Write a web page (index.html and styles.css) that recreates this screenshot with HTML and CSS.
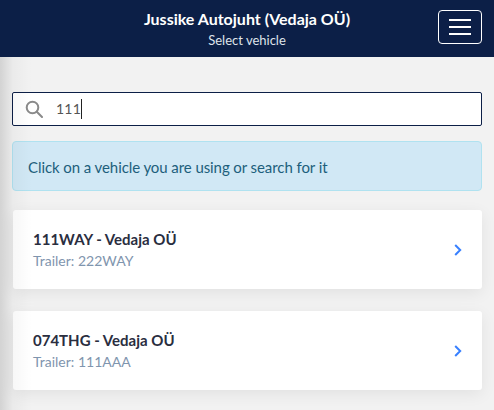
FILE: index.html
```html
<!DOCTYPE html>
<html>
<head>
	<meta charset="utf-8">
	<meta name="viewport" content="width=device-width, initial-scale=1">
	<title>Select vehicle</title>
	<link rel="stylesheet" href="styles.css">
</head>
<body>
	<div class="edge-shadow"></div>
	<header class="topbar">
		<div class="topbar-title">
			<h1>Jussike Autojuht (Vedaja OÜ)</h1>
			<p>Select vehicle</p>
		</div>
		<button class="menu-btn" type="button" aria-label="Menu">
			<span></span>
			<span></span>
			<span></span>
		</button>
	</header>
	<main class="content">
		<div class="search">
			<svg class="search-icon" width="18" height="18" viewBox="0 0 18 18" fill="none" stroke="#8a8a8a" stroke-width="2">
				<circle cx="7.5" cy="7.5" r="5.8"></circle>
				<path d="M11.8 11.8 L17 17" stroke-linecap="round"></path>
			</svg>
			<span class="search-value">111</span>
		</div>
		<div class="alert">Click on a vehicle you are using or search for it</div>
		<a class="vehicle">
			<div>
				<div class="vehicle-name">111WAY - Vedaja OÜ</div>
				<div class="vehicle-trailer">Trailer: 222WAY</div>
			</div>
			<svg class="chevron" width="8" height="12" viewBox="0 0 8 12" fill="none" stroke="#3880ff" stroke-width="2">
				<path d="M1.2 1 L6.2 6 L1.2 11"></path>
			</svg>
		</a>
		<a class="vehicle">
			<div>
				<div class="vehicle-name">074THG - Vedaja OÜ</div>
				<div class="vehicle-trailer">Trailer: 111AAA</div>
			</div>
			<svg class="chevron" width="8" height="12" viewBox="0 0 8 12" fill="none" stroke="#3880ff" stroke-width="2">
				<path d="M1.2 1 L6.2 6 L1.2 11"></path>
			</svg>
		</a>
	</main>
</body>
</html>
```

FILE: styles.css
```css
* {
	box-sizing: border-box;
	margin: 0;
	padding: 0;
}

html, body {
	height: 100%;
}

body {
	position: relative;
	background: #f2f2f2;
	font-family: Lato, "Open Sans", sans-serif;
	overflow: hidden;
}

.edge-shadow {
	position: absolute;
	top: 57px;
	bottom: 0;
	left: 0;
	width: 32px;
	background: linear-gradient(90deg, rgba(0, 0, 0, 0.13), rgba(0, 0, 0, 0.03) 40%, rgba(0, 0, 0, 0));
	pointer-events: none;
}

/* Header */
.topbar {
	position: relative;
	display: flex;
	align-items: center;
	justify-content: center;
	height: 57px;
	background: #0c1f47;
	color: white;
}

.topbar-title {
	text-align: center;
}

.topbar-title h1 {
	font-size: 16px;
	line-height: 20px;
	font-weight: 700;
}

.topbar-title p {
	margin-top: 4px;
	font-size: 13px;
	line-height: 15px;
	color: #dfe3ea;
}

.menu-btn {
	position: absolute;
	top: 10px;
	right: 12px;
	display: flex;
	flex-direction: column;
	align-items: center;
	justify-content: center;
	gap: 5px;
	width: 44px;
	height: 34px;
	border: 1px solid white;
	border-radius: 4px;
	background: transparent;
}

.menu-btn span {
	width: 22px;
	height: 2px;
	background: white;
}

/* Page content */
.content {
	padding: 35px 12px 0;
}

.search {
	display: flex;
	align-items: center;
	height: 34px;
	padding-left: 12px;
	background: white;
	border: 1px solid #0c1f47;
	border-radius: 2px;
}

.search-icon {
	margin-right: 13px;
}

.search-value {
	font-size: 14px;
	line-height: 20px;
	letter-spacing: 0.2px;
	color: #555;
	border-right: 1px solid #222;
}

.alert {
	margin-top: 15px;
	height: 50px;
	padding: 0 15px;
	line-height: 50px;
	font-size: 15px;
	letter-spacing: -0.08px;
	color: #1d5f7c;
	background: #d1e8f5;
	border: 1px solid #b0e2f0;
	border-radius: 4px;
}

.vehicle {
	display: flex;
	align-items: center;
	justify-content: space-between;
	height: 79px;
	margin: 19px 0 0 1px;
	padding: 0 20px;
	background: white;
	border-radius: 3px;
	box-shadow: 0 4px 16px rgba(0, 0, 0, 0.07);
}

.vehicle + .vehicle {
	margin-top: 22px;
}

.vehicle-name {
	font-size: 15px;
	line-height: 20px;
	font-weight: 700;
	color: #2a2e3f;
}

.vehicle-trailer {
	margin-top: 2px;
	font-size: 14px;
	line-height: 20px;
	color: #7f95ae;
}

.chevron {
	flex: none;
}
```
